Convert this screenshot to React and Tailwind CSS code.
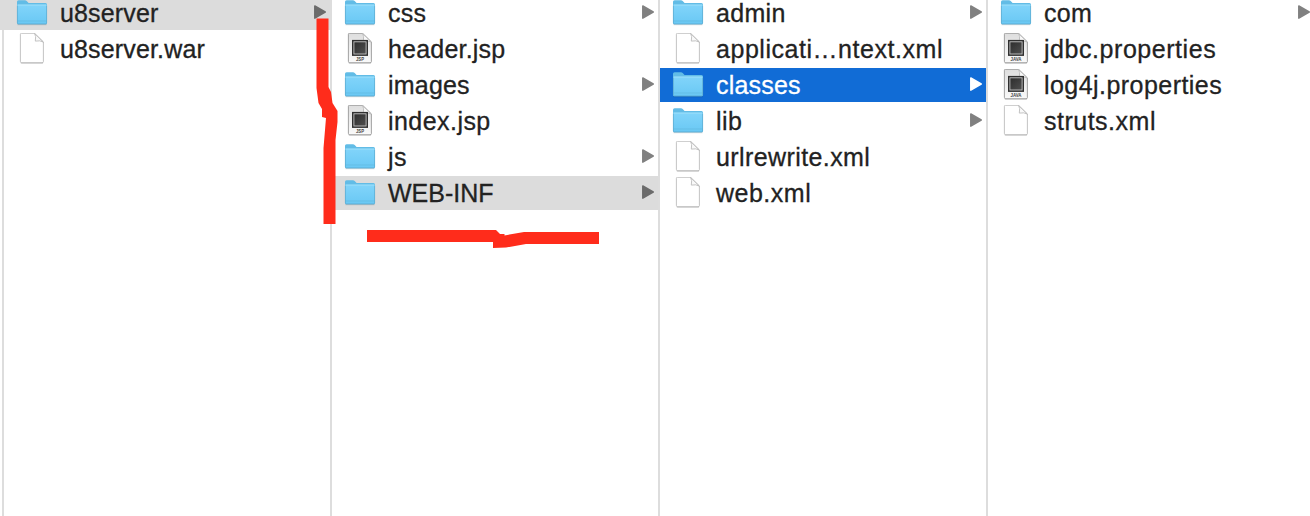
const columns = [
  [
    { name: 'u8server', kind: 'folder', state: 'path', tracking: 'tracking-[0.15px]' },
    { name: 'u8server.war', kind: 'file', tracking: 'tracking-[0.15px]' },
  ],
  [
    { name: 'css', kind: 'folder', tracking: 'tracking-[0.3px]' },
    { name: 'header.jsp', kind: 'JSP', tracking: 'tracking-[0.2px]' },
    { name: 'images', kind: 'folder', tracking: 'tracking-[0.2px]' },
    { name: 'index.jsp', kind: 'JSP', tracking: 'tracking-[0.45px]' },
    { name: 'js', kind: 'folder', tracking: 'tracking-[0.4px]' },
    { name: 'WEB-INF', kind: 'folder', state: 'path', tracking: 'tracking-[0px]' },
  ],
  [
    { name: 'admin', kind: 'folder', tracking: 'tracking-[0.3px]' },
    { name: 'applicati…ntext.xml', kind: 'file', tracking: 'tracking-[0.54px]' },
    { name: 'classes', kind: 'folder', state: 'active', tracking: 'tracking-[0.2px]' },
    { name: 'lib', kind: 'folder', tracking: 'tracking-[0.5px]' },
    { name: 'urlrewrite.xml', kind: 'file', tracking: 'tracking-[0.4px]' },
    { name: 'web.xml', kind: 'file', tracking: 'tracking-[0.5px]' },
  ],
  [
    { name: 'com', kind: 'folder', tracking: 'tracking-[0.3px]' },
    { name: 'jdbc.properties', kind: 'JAVA', tracking: 'tracking-[0.55px]' },
    { name: 'log4j.properties', kind: 'JAVA', tracking: 'tracking-[0.45px]' },
    { name: 'struts.xml', kind: 'file', tracking: 'tracking-[0.5px]' },
  ],
];

const rowTone = {
  path: 'bg-[#dcdcdc] text-[#222222]',
  active: 'bg-[#116cd6] text-white',
};

function FolderIcon() {
  return (
    <svg width="32" height="32" viewBox="0 0 32 32" className="block">
      <path d="M1.5 27.6h29" stroke="#000" strokeOpacity=".16" strokeWidth="1.2" />
      <path d="M1 4.8Q1 3.2 2.6 3.2H9Q10 3.2 10.7 3.9L12.6 6.1H29.5Q31 6.1 31 7.6V14H1Z" fill="#62bce6" />
      <path d="M1 8.4Q1 7.8 2 7.8H30Q31 7.8 31 8.4V26Q31 27.2 29.8 27.2H2.2Q1 27.2 1 26Z" fill="url(#folder-face)" />
      <path d="M1.6 8H30.4" stroke="#a4e2fb" strokeWidth=".9" />
      <path d="M1.5 24H30.5" stroke="#62b9e0" strokeWidth=".7" />
      <path d="M1.4 8.6V26Q1.4 26.9 2.3 26.9H29.7Q30.6 26.9 30.6 26V8.6" fill="none" stroke="#5aa8cd" strokeWidth=".7" />
    </svg>
  );
}

function FileIcon({ label }) {
  return (
    <svg width="32" height="32" viewBox="0 0.7 32 32" className="block">
      <path
        d="M5.4 1H18.6L27.4 9.6V29.4Q27.4 30.5 26 30.5H5.8Q4.4 30.5 4.4 29V2Q4.4 1 5.4 1Z"
        fill={label ? 'url(#doc-face)' : '#fff'}
        stroke={label ? '#999' : '#bcbcbc'}
        strokeWidth=".9"
      />
      <path d="M4.8 30.8H27" stroke="#8c8c8c" strokeOpacity=".5" strokeWidth=".8" />
      <path d="M18.5 1.1Q20.4 3.6 19.3 8.8Q24.2 7.8 27.3 9.8Z" fill="#f9f9f9" stroke="#b5b5b5" strokeWidth=".8" />
      {label && (
        <>
          <rect x="8" y="7.6" width="16" height="16" fill="#303030" />
          <rect x="9.9" y="9.5" width="12.2" height="12.2" fill="url(#screen-face)" stroke="#c4c4c4" strokeWidth=".9" />
          <text
            x="16"
            y="28.8"
            textAnchor="middle"
            fontFamily="Liberation Sans, sans-serif"
            fontSize="5"
            fontWeight="700"
            textLength={label === 'JAVA' ? 11 : 8}
            lengthAdjust="spacingAndGlyphs"
            fill="#444"
          >
            {label}
          </text>
        </>
      )}
    </svg>
  );
}

function Row({ item }) {
  const tone = item.state ? rowTone[item.state] : 'text-[#222222]';
  const arrow = item.state === 'active' ? 'text-white' : item.state ? 'text-[#6b6b6b]' : 'text-[#808080]';
  return (
    <div className={`flex h-[34px] shrink-0 items-center pl-3 pr-1 ${tone}`}>
      <div className="w-8 shrink-0">
        {item.kind === 'folder' ? <FolderIcon /> : <FileIcon label={item.kind === 'file' ? null : item.kind} />}
      </div>
      <span
        className={`ml-3 grow whitespace-nowrap text-[25px] leading-[34px] [-webkit-text-stroke:0.3px_currentColor] ${item.tracking}`}
      >
        {item.name}
      </span>
      {item.kind === 'folder' && (
        <svg width="12" height="14" viewBox="0 0 12 14" className={`-mt-0.5 block shrink-0 ${arrow}`}>
          <path d="M.8 .9L11.2 7L.8 13.1Z" fill="currentColor" stroke="currentColor" strokeWidth="1.5" strokeLinejoin="round" />
        </svg>
      )}
    </div>
  );
}

export default function App() {
  return (
    <div className="relative flex h-[516px] w-[1310px] overflow-hidden bg-white font-['Liberation_Sans',sans-serif]">
      <svg width="0" height="0" className="absolute">
        <defs>
          <linearGradient id="folder-face" x1="0" y1="0" x2="0" y2="1">
            <stop offset="0" stopColor="#81d4fa" />
            <stop offset="1" stopColor="#69c8f4" />
          </linearGradient>
          <linearGradient id="doc-face" x1="0" y1="0" x2="0" y2="1">
            <stop offset="0" stopColor="#dedede" />
            <stop offset="1" stopColor="#fafafa" />
          </linearGradient>
          <linearGradient id="screen-face" x1="0" y1="0" x2="1" y2="1">
            <stop offset="0" stopColor="#2c2c2c" />
            <stop offset="1" stopColor="#505050" />
          </linearGradient>
        </defs>
      </svg>
      <div className="w-0.5 shrink-0">
        <div className="h-[30px] bg-[#dcdcdc]" />
      </div>
      {columns.map((items, i) => (
        <div key={i} className="flex w-[328px] shrink-0">
          <div className={`w-0.5 shrink-0 bg-[#dddddd] ${i === 0 ? 'mt-[30px]' : ''}`} />
          <div className={`-mt-1 flex grow flex-col gap-0.5 ${i === 0 ? '-ml-0.5 *:first:pl-3.5 *:last:ml-0.5' : ''}`}>
            {items.map((item) => (
              <Row key={item.name} item={item} />
            ))}
          </div>
        </div>
      ))}
      <svg width="1310" height="516" className="pointer-events-none absolute inset-0">
        <g fill="#ff2c1b">
          <path d="M316.5 18.5H328.5V87L331 92L332.5 103L337.5 111L337.5 122L335.5 140V224H323.5V148L326 118L322 117L322 109L318.5 103L316.5 88Z" />
          <path d="M367 230H496L500 234H504.5V235.5L524 232H599V244H526L506 247.5L493 248V242H367Z" />
        </g>
      </svg>
    </div>
  );
}
